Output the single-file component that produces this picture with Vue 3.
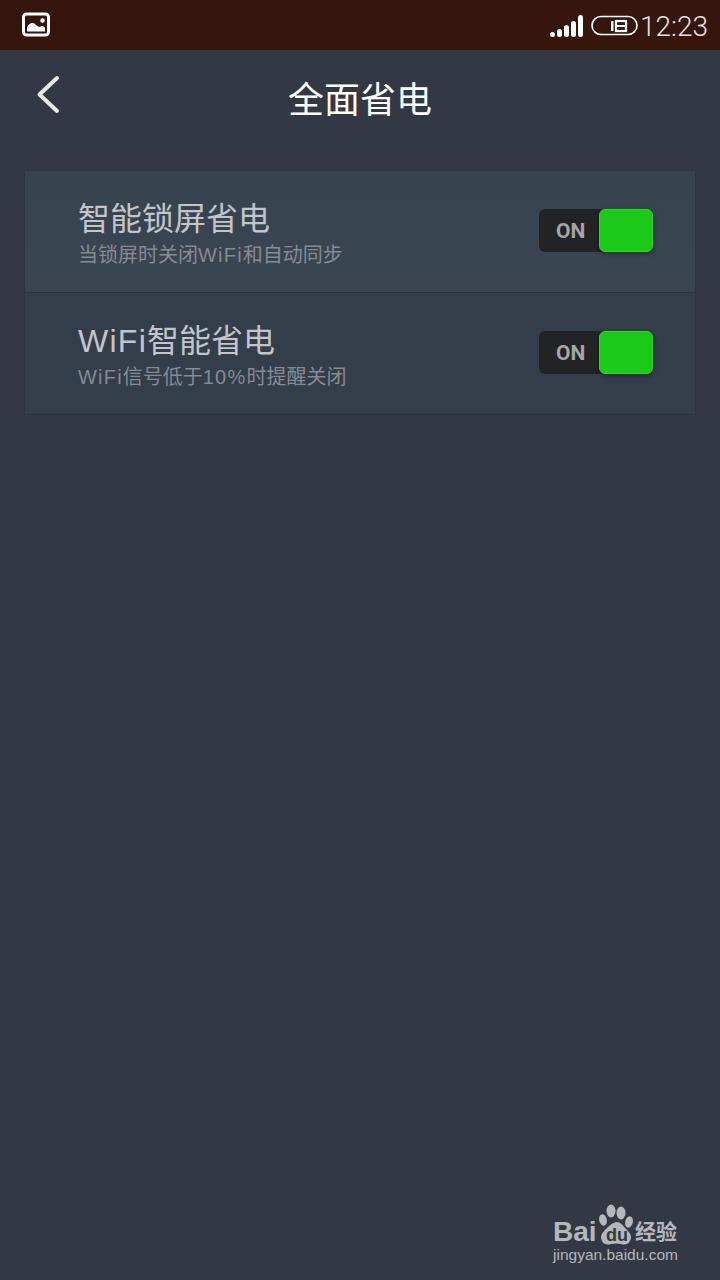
<template>
  <div class="screen">
    <div class="status-bar">
      <svg class="pic-icon" width="30" height="26" viewBox="0 0 30 26">
        <rect x="1.500" y="2" width="25" height="21" rx="3" fill="none" stroke="#fff" stroke-width="3" />
        <circle cx="20.500" cy="8.500" r="2.200" fill="#fff" />
        <path d="M5 19.500v-4.500c2-3 4-4.500 6-4 2 .5 3 2.500 5 3.500 2 .8 3-.5 4-.5 1.500 0 2.500 1 3 2v3.500z" fill="#fff" />
      </svg>
      <div class="status-right">
        <svg class="signal" width="34" height="24" viewBox="0 0 34 24">
          <rect x="0" y="17" width="5" height="5" rx="2.500" fill="#fff" />
          <rect x="7" y="14" width="5" height="8" rx="2.500" fill="#fff" />
          <rect x="14" y="10" width="5" height="12" rx="2.500" fill="#fff" />
          <rect x="21" y="6" width="5" height="16" rx="2.500" fill="#fff" />
          <rect x="28" y="0" width="5" height="22" rx="2.500" fill="#fff" />
        </svg>
        <svg class="battery" width="48" height="22" viewBox="0 0 48 22">
          <rect x="1" y="1.500" width="45" height="18" rx="9" fill="none" stroke="#fff" stroke-width="1.600" />
          <rect x="20" y="6" width="2.500" height="10" fill="#fff" />
          <rect x="25" y="6" width="10" height="10" fill="none" stroke="#fff" stroke-width="2.200" />
          <rect x="25" y="10" width="10" height="2" fill="#fff" />
        </svg>
        <span class="clock">12:23</span>
      </div>
    </div>

    <div class="nav-bar">
      <svg class="back" width="26" height="40" viewBox="0 0 26 40">
        <path d="M22 3 L4.500 19.500 L22 36" fill="none" stroke="#e8e8e8" stroke-width="4" stroke-linecap="round" stroke-linejoin="round" />
      </svg>
      <h1 class="title">全面省电</h1>
    </div>

    <div class="card">
      <div v-for="(item, i) in items" :key="i" class="row" :class="{ first: i === 0 }">
        <div class="row-text">
          <div class="row-title">
            <span v-for="(part, p) in split(item.title)" :key="p" :class="{ latin: isLatin(part) }">{{ part }}</span>
          </div>
          <div class="row-sub">
            <span v-for="(part, p) in split(item.sub)" :key="p" :class="{ latin: isLatin(part) }">{{ part }}</span>
          </div>
        </div>
        <div class="switch">
          <span class="switch-label">ON</span>
          <span class="switch-thumb"></span>
        </div>
      </div>
    </div>

    <div class="watermark">
      <div class="wm-top">
        <span class="wm-bai">Bai</span>
        <svg class="wm-paw" width="38" height="44" viewBox="0 0 38 44">
          <ellipse cx="6" cy="17" rx="3.800" ry="5.800" fill="#b4b7bb" transform="rotate(-15 6 17)" />
          <ellipse cx="14" cy="8" rx="4.500" ry="6.500" fill="#b4b7bb" />
          <ellipse cx="24" cy="10" rx="4.500" ry="6.500" fill="#b4b7bb" />
          <ellipse cx="32" cy="19" rx="3.800" ry="5.800" fill="#b4b7bb" transform="rotate(15 32 19)" />
          <path d="M20 19c4 0 6 4 10 8 4 4 5 7 3 11-2 4-6 4-9 3-3-.8-7-.8-10 0-3 1-7 1-9-3-2-4-1-7 3-11 4-4 8-8 12-8z" fill="#b4b7bb" />
        </svg>
        <span class="wm-du">du</span>
        <span class="wm-cn">经验</span>
      </div>
      <div class="wm-url">jingyan.baidu.com</div>
    </div>
  </div>
</template>

<script setup>
const items = [
  { title: '智能锁屏省电', sub: '当锁屏时关闭WiFi和自动同步' },
  { title: 'WiFi智能省电', sub: 'WiFi信号低于10%时提醒关闭' },
]

// latin runs get a bit of tracking, the original font is wider there
const split = (s) => s.match(/[\x00-\x7f]+|[^\x00-\x7f]+/g)
const isLatin = (s) => /^[\x00-\x7f]/.test(s)
</script>

<style>
html,
body {
  margin: 0;
  background: #333944;
}
</style>

<style scoped>
.screen {
  position: relative;
  width: 720px;
  height: 1280px;
  overflow: hidden;
  background: #333944;
  font-family: 'Liberation Sans', 'Noto Sans CJK SC', sans-serif;
}
.status-bar {
  height: 50px;
  background: #35150c;
  display: flex;
  align-items: center;
  justify-content: space-between;
  padding: 0 12px 0 22px;
  box-sizing: border-box;
}
.status-right {
  display: flex;
  align-items: center;
}
.signal {
  margin-right: 7px;
  margin-top: 3px;
}
.battery {
  margin-right: 1px;
  margin-top: 2px;
}
.clock {
  color: #e6e2e0;
  font-family: Roboto, 'Liberation Sans', sans-serif;
  font-size: 28px;
  font-weight: 300;
  line-height: 50px;
  margin-top: 3px;
}
.nav-bar {
  height: 100px;
  display: flex;
  align-items: center;
  justify-content: center;
  position: relative;
}
.back {
  position: absolute;
  left: 35px;
  top: 25px;
}
.title {
  margin: 2px 0 0;
  color: #fff;
  font-size: 36px;
  font-weight: 400;
  line-height: 98px;
}
.card {
  margin: 21px 24px 0;
  border-left: 1px solid #2f3540;
  border-right: 1px solid #2f3540;
  border-bottom: 1px solid #2e343e;
}
.row {
  height: 121px;
  box-sizing: border-box;
  display: flex;
  align-items: center;
  justify-content: space-between;
  padding: 0 42px 0 53px;
  background: #343d4a;
}
.row.first {
  height: 122px;
  background: linear-gradient(#384350, #3b4552);
  border-bottom: 1px solid #2d323b;
}
.row-text {
  display: flex;
  flex-direction: column;
  margin-top: 6px;
}
.row-title {
  color: #c2c5c9;
  font-size: 32px;
  line-height: 36px;
}
.row-sub {
  color: #858b93;
  font-size: 20px;
  line-height: 26px;
  margin-top: 5px;
}
.latin {
  letter-spacing: 0.04em;
}
.row-sub .latin {
  letter-spacing: 0.06em;
}
.switch {
  position: relative;
  width: 114px;
  height: 43px;
  margin-bottom: 2px;
  background: #222326;
  border-radius: 6px;
  display: flex;
  align-items: center;
}
.switch-label {
  color: #a6a6a6;
  font-family: Roboto, 'Liberation Sans', sans-serif;
  font-size: 21px;
  font-weight: 700;
  margin-left: 17px;
}
.switch-thumb {
  position: absolute;
  right: 0;
  top: 0;
  width: 54px;
  height: 43px;
  box-sizing: border-box;
  background: #1bca18;
  border: 1px solid #28dc22;
  border-radius: 6px;
  box-shadow: 0 2px 5px rgba(0, 0, 0, 0.35);
}
.watermark {
  position: absolute;
  left: 553px;
  top: 1202px;
  width: 130px;
}
.wm-top {
  position: relative;
  height: 44px;
  color: #b4b7bb;
}
.wm-bai {
  position: absolute;
  left: 0;
  top: 14px;
  font-size: 28px;
  font-weight: 700;
  line-height: 32px;
}
.wm-paw {
  position: absolute;
  left: 44px;
  top: 1px;
}
.wm-du {
  position: absolute;
  left: 53px;
  top: 23px;
  font-size: 18px;
  font-weight: 700;
  line-height: 20px;
  color: #333944;
}
.wm-cn {
  position: absolute;
  left: 82px;
  top: 16px;
  font-size: 21px;
  font-weight: 700;
  line-height: 28px;
}
.wm-url {
  color: #b4b7bb;
  font-size: 15.500px;
  line-height: 20px;
  margin-top: -1px;
  white-space: nowrap;
}
</style>
